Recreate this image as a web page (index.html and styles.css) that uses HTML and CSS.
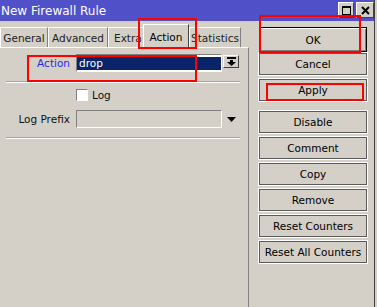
FILE: index.html
```html
<!DOCTYPE html>
<html lang="en">
<head>
<meta charset="UTF-8">
<title>New Firewall Rule</title>
<link rel="stylesheet" href="styles.css">
</head>
<body>
    <div class="window">
        <div class="titlebar">
            <span class="title">New Firewall Rule</span>
            <span class="tb-btns">
                <span class="tb-btn"><span class="max-glyph"></span></span>
                <span class="tb-btn">
                    <svg width="9" height="9" viewBox="0 0 9 9"><path d="M1 1 L8 8 M8 1 L1 8" stroke="#000" stroke-width="2"/></svg>
                </span>
            </span>
        </div>

        <div class="main">
            <div class="left">
                <div class="tabs">
                    <div class="tab tab-general">General</div>
                    <div class="tab tab-advanced">Advanced</div>
                    <div class="tab tab-extra">Extra</div>
                    <div class="tab tab-action active">Action</div>
                    <div class="tab tab-stats">Statistics</div>
                </div>
                <div class="panel">
                    <div class="row">
                        <label class="lbl lbl-blue">Action</label>
                        <div class="field field-select"><span class="selected">drop</span></div>
                        <div class="drop-btn">
                            <svg width="9" height="9" viewBox="0 0 9 9">
                                <rect x="0" y="0" width="9" height="2" fill="#000"/>
                                <rect x="3" y="3" width="3" height="2" fill="#000"/>
                                <polygon points="0,5 9,5 4.5,9" fill="#000"/>
                            </svg>
                        </div>
                    </div>
                    <div class="sep"></div>
                    <div class="row row-log">
                        <span class="lbl"></span>
                        <span class="check"></span>
                        <span class="check-text">Log</span>
                    </div>
                    <div class="row row-prefix">
                        <label class="lbl">Log Prefix</label>
                        <div class="field field-empty"></div>
                        <svg class="tri" width="9" height="5" viewBox="0 0 9 5"><polygon points="0,0 9,0 4.5,5" fill="#000"/></svg>
                    </div>
                    <div class="sep"></div>
                </div>
            </div>

            <div class="actions">
                <div class="btn btn-ok">OK</div>
                <div class="btn btn-cancel">Cancel</div>
                <div class="btn btn-apply">Apply</div>
                <div class="btn btn-disable">Disable</div>
                <div class="btn">Comment</div>
                <div class="btn">Copy</div>
                <div class="btn">Remove</div>
                <div class="btn">Reset Counters</div>
                <div class="btn">Reset All Counters</div>
            </div>
        </div>

        <!-- red annotation boxes -->
        <div class="mark mark-tab"></div>
        <div class="mark mark-action"></div>
        <div class="mark mark-ok"></div>
        <div class="mark mark-apply"></div>
    </div>
</body>
</html>
```

FILE: styles.css
```css
body, html {
    margin: 0;
    padding: 0;
    height: 100%;
    overflow: hidden;
}
body {
    background: #d4d0c8;
    font-family: "DejaVu Sans", sans-serif;
    font-size: 10.5px;
    color: #111;
}
.window {
    position: relative;
    width: 375px;
    height: 307px;
    box-sizing: border-box;
    border-right: 1px solid #404040;
}

/* Title bar */
.titlebar {
    height: 21px;
    background: #5050c8;
    color: #fff;
    font-size: 12px;
    display: flex;
    align-items: center;
    justify-content: space-between;
    padding-left: 1px;
}
.title {
    padding-top: 1px;
}
.tb-btns {
    display: flex;
    gap: 2px;
    align-self: flex-start;
    margin-top: 2px;
}
.tb-btn {
    width: 16px;
    height: 16px;
    box-sizing: border-box;
    background: #d4d0c8;
    border: 1px solid;
    border-color: #fff #404040 #404040 #fff;
    display: flex;
    align-items: center;
    justify-content: center;
}
.tb-btn:last-child {
    width: 18px;
}
.max-glyph {
    width: 9px;
    height: 9px;
    box-sizing: border-box;
    border: 1px solid #000;
    border-top-width: 2px;
}

.main {
    display: flex;
    height: 286px;
}
.left {
    width: 249px;
    display: flex;
    flex-direction: column;
}

/* Tabs */
.tabs {
    display: flex;
    align-items: flex-end;
    height: 26px;
}
.tab {
    height: 20px;
    box-sizing: border-box;
    border-top: 1px solid #fff;
    border-left: 1px solid #fff;
    border-right: 1px solid #808080;
    display: flex;
    align-items: center;
    justify-content: center;
    white-space: nowrap;
    overflow: hidden;
    color: #222;
}
.tab-general { width: 48px; }
.tab-advanced { width: 60px; }
.tab-extra {
    width: 35px;
    justify-content: flex-start;
    padding-left: 5px;
    border-right: none;
}
.tab-action { width: 46px; }
.tab-stats { width: 52px; justify-content: flex-end; padding-right: 1px; }
.tab.active {
    height: 24px;
    margin-bottom: -1px;
    background: #d4d0c8;
    border-right-color: #404040;
    position: relative;
    color: #000;
}

/* Panel */
.panel {
    flex: 1;
    border-top: 1px solid #fff;
    border-right: 1px solid #808080;
    padding: 6px 8px 0 6px;
}
.row {
    display: flex;
    align-items: center;
}
.lbl {
    width: 64px;
    margin-right: 6px;
    text-align: right;
    color: #111;
}
.lbl-blue {
    color: #2a2ae6;
}
.field {
    width: 146px;
    height: 18px;
    box-sizing: border-box;
    border: 1px solid;
    border-color: #808080 #fff #fff #808080;
}
.field-select {
    background: #fff;
    padding: 2px 0 1px 0;
}
.selected {
    display: block;
    height: 13px;
    background: #0a246a;
    color: #fff;
    line-height: 13px;
    padding-left: 2px;
}
.drop-btn {
    width: 16px;
    height: 13px;
    box-sizing: border-box;
    margin-left: 1px;
    align-self: flex-start;
    margin-top: 1px;
    border: 1px solid;
    border-color: #fff #404040 #404040 #fff;
    display: flex;
    align-items: center;
    justify-content: center;
}
.sep {
    height: 0;
    border-top: 1px solid #a8a49c;
    border-bottom: 1px solid #fff;
    margin-top: 9px;
}
.row-log {
    margin-top: 6px;
}
.check {
    width: 12px;
    height: 12px;
    box-sizing: border-box;
    background: #fff;
    border: 1px solid;
    border-color: #808080 #fff #fff #808080;
}
.check-text {
    margin-left: 4px;
}
.row-prefix {
    margin-top: 9px;
}
.tri {
    margin-left: 5px;
}

/* Buttons column */
.actions {
    width: 108px;
    margin-left: 10px;
    padding-top: 6px;
    display: flex;
    flex-direction: column;
}
.btn {
    height: 22px;
    box-sizing: border-box;
    border: 1px solid #5a5a5a;
    box-shadow: 0 0 0 1px #fff;
    display: flex;
    align-items: center;
    justify-content: center;
    margin-top: 4px;
    color: #000;
    white-space: nowrap;
}
.btn-ok {
    height: 25px;
    margin-top: 0;
    border-color: #000;
    box-shadow: inset 1px 1px 0 #fff, inset -1px -1px 0 #808080;
}
.btn-cancel {
    margin-top: 1px;
}
.btn-disable {
    margin-top: 10px;
}

/* Red annotation boxes */
.mark {
    position: absolute;
    border: 2px solid #ff0000;
    box-sizing: border-box;
}
.mark-tab { left: 138px; top: 18px; width: 59px; height: 31px; }
.mark-action { left: 27px; top: 55px; width: 170px; height: 27px; }
.mark-ok { left: 259px; top: 15px; width: 102px; height: 38px; }
.mark-apply { left: 266px; top: 83px; width: 98px; height: 18px; }
```
